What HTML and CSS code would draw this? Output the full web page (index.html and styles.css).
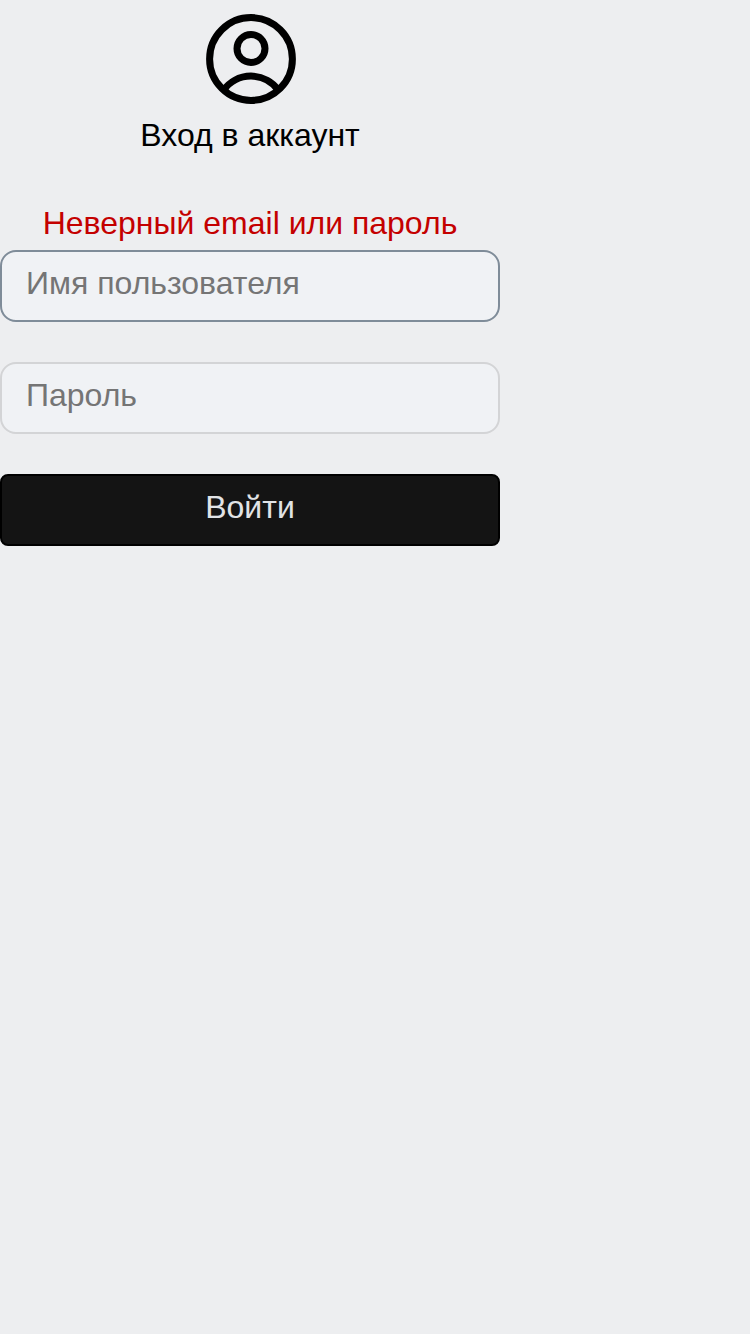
FILE: index.html
```html
<!DOCTYPE html>
<html lang="ru">
<head>
<meta charset="utf-8">
<title>Вход в аккаунт</title>
<link rel="stylesheet" href="styles.css">
</head>
<body>
<form class="login">
  <svg class="login__icon" viewBox="0 0 96 96" aria-hidden="true">
    <circle cx="48" cy="48" r="41.4"/>
    <circle cx="48" cy="37.5" r="14"/>
    <path d="M20.7 79.1A33.6 33.6 0 0 1 75.3 79.1"/>
  </svg>
  <h1 class="login__title">Вход в аккаунт</h1>
  <p class="login__error">Неверный email или пароль</p>
  <input class="login__field login__field--active" type="text" placeholder="Имя пользователя">
  <input class="login__field" type="password" placeholder="Пароль">
  <button class="login__submit" type="button">Войти</button>
</form>
</body>
</html>
```

FILE: styles.css
```css
* { box-sizing: border-box; }
body {
  margin: 0;
  background: #edeef0;
  font-family: "Liberation Sans", Arial, sans-serif;
  font-size: 32px;
  line-height: 36px;
}
.login {
  display: flex;
  flex-direction: column;
  width: 500px;
  padding-top: 11px;
}
.login__icon {
  width: 96px;
  height: 96px;
  margin-left: 203px;
  fill: none;
  stroke: #000;
  stroke-width: 7;
}
.login__title {
  margin: 10px 0 0;
  font: inherit;
  text-align: center;
  color: #000;
}
.login__error {
  margin: 52px 0 9px;
  text-align: center;
  color: #c40000;
}
.login__field {
  width: 100%;
  height: 72px;
  margin: 0 0 40px;
  padding: 0 24px 6px;
  border: 2px solid #d3d4d6;
  border-radius: 16px;
  background: #f0f2f5;
  font: inherit;
  outline: none;
}
.login__field::placeholder { color: #757575; }
.login__field--active { border-color: #7f8c99; }
.login__submit {
  height: 72px;
  padding: 0 24px 6px;
  border: 2px solid #000;
  border-radius: 8px;
  background: #141414;
  color: #e1e3e6;
  font: inherit;
}
```
